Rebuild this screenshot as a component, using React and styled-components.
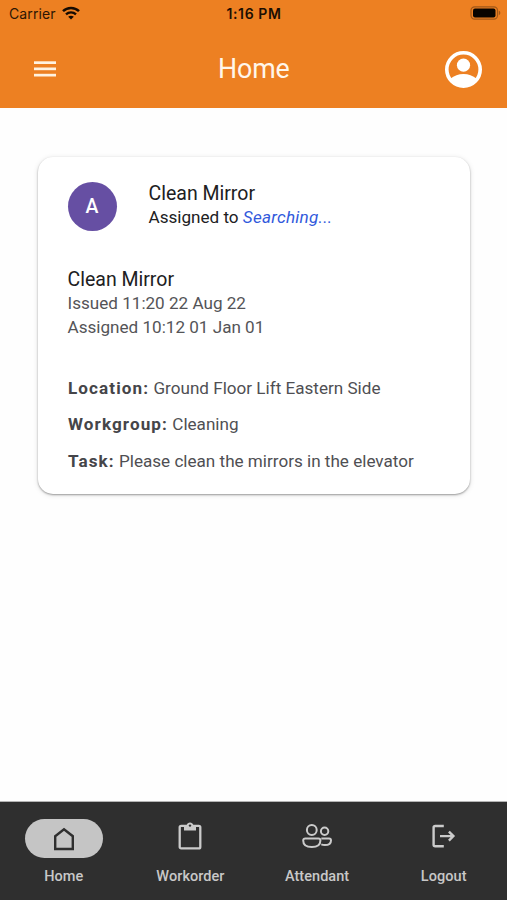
import styled, { createGlobalStyle } from "styled-components";

const GlobalStyle = createGlobalStyle`
  * {
    box-sizing: border-box;
  }
  body {
    margin: 0;
    background: #fefefe;
    font-family: Roboto, sans-serif;
  }
`;

const tabs = [
  { name: "Home", icon: HomeIcon, active: true },
  { name: "Workorder", icon: ClipboardIcon },
  { name: "Attendant", icon: PeopleIcon },
  { name: "Logout", icon: LogoutIcon },
];

const details = [
  { label: "Location:", value: "Ground Floor Lift Eastern Side" },
  { label: "Workgroup:", value: "Cleaning" },
  { label: "Task:", value: "Please clean the mirrors in the elevator" },
];

export default function App() {
  return (
    <Screen>
      <GlobalStyle />
      <Header>
        <StatusBar>
          <Carrier>
            Carrier
            <WifiIcon />
          </Carrier>
          <Clock>1:16 PM</Clock>
          <Battery>
            <BatteryIcon />
          </Battery>
        </StatusBar>
        <Toolbar>
          <IconButton aria-label="Menu">
            <MenuIcon />
          </IconButton>
          <Title>Home</Title>
          <IconButton aria-label="Account">
            <AccountIcon />
          </IconButton>
        </Toolbar>
      </Header>
      <Content>
        <Card>
          <CardHead>
            <Avatar>A</Avatar>
            <div>
              <CardTitle>Clean Mirror</CardTitle>
              <Assignee>
                Assigned to <em>Searching...</em>
              </Assignee>
            </div>
          </CardHead>
          <CardBody>
            <CardTitle>Clean Mirror</CardTitle>
            <Meta>Issued 11:20 22 Aug 22</Meta>
            <Meta>Assigned 10:12 01 Jan 01</Meta>
          </CardBody>
          <Details>
            {details.map((d) => (
              <Detail key={d.label}>
                <b>{d.label}</b> {d.value}
              </Detail>
            ))}
          </Details>
        </Card>
      </Content>
      <TabBar>
        {tabs.map(({ name, icon: Icon, active }) => (
          <Tab key={name}>
            <Pill $active={active}>
              <Icon />
            </Pill>
            <span>{name}</span>
          </Tab>
        ))}
      </TabBar>
    </Screen>
  );
}

function WifiIcon() {
  return (
    <svg width="18" height="14" viewBox="0 0 18 14" fill="none" stroke="#160b02">
      <path d="M1 5.2C5.4 .9 12.6 .9 17 5.2" strokeWidth="2.5" />
      <path d="M4 8.3C6.8 5.6 11.2 5.6 14 8.3" strokeWidth="2.3" />
      <path d="M9 13.6L6.2 10.8C7.7 9.4 10.3 9.4 11.8 10.8Z" fill="#160b02" stroke="none" />
    </svg>
  );
}

function BatteryIcon() {
  return (
    <svg width="31" height="14" viewBox="0 0 31 14">
      <rect x="1" y=".8" width="26.5" height="12.4" rx="3.6" fill="none" stroke="#a05718" strokeWidth="1.2" />
      <rect x="3" y="2.6" width="22.5" height="8.8" rx="2" fill="#080400" />
      <path d="M28.8 4.8C30.8 5.4 30.8 8.6 28.8 9.2Z" fill="#a05718" />
    </svg>
  );
}

function MenuIcon() {
  return (
    <svg width="22" height="16" viewBox="0 0 22 16" fill="#fff2e0">
      <rect width="22" height="2.7" y="0.3" />
      <rect width="22" height="2.7" y="6.5" />
      <rect width="22" height="2.7" y="12.8" />
    </svg>
  );
}

function AccountIcon() {
  return (
    <svg width="37" height="37" viewBox="0 0 37 37" fill="#fff">
      <circle cx="18.5" cy="18.5" r="16.7" fill="none" stroke="#fff" strokeWidth="3.6" />
      <circle cx="18.5" cy="14.2" r="6.6" />
      <path d="M5.5 27.5C9 24.8 13.6 23 18.5 23S28 24.8 31.5 27.5C28.8 31.8 24 34.6 18.5 34.6S8.2 31.8 5.5 27.5Z" />
    </svg>
  );
}

function HomeIcon() {
  return (
    <svg width="22" height="24" viewBox="0 0 22 24" fill="none" stroke="#2f2f2f" strokeWidth="2.4">
      <path d="M2.2 9.2L11 2.3L19.8 9.2V22H2.2Z" />
    </svg>
  );
}

function ClipboardIcon() {
  return (
    <svg width="24" height="28" viewBox="0 0 24 28" fill="none" stroke="#cbcbcb" strokeWidth="2.3">
      <rect x="1.7" y="3.8" width="20.6" height="22.6" rx="1.5" />
      <path d="M6 3H8.7C9.2 -.4 14.8 -.4 15.3 3H18V8.6H6Z" fill="#cbcbcb" stroke="none" />
      <circle cx="12" cy="3.6" r="1.2" fill="#2f2f2f" stroke="none" />
    </svg>
  );
}

function PeopleIcon() {
  return (
    <svg width="30" height="24" viewBox="0 0 30 24" fill="none" stroke="#cbcbcb" strokeWidth="2">
      <circle cx="9.8" cy="6" r="4.9" />
      <circle cx="22.6" cy="7.3" r="3.7" />
      <path d="M3.2 14.5H16.5C17.6 14.5 18.4 15.3 18.4 16.4C18.4 20.3 15.3 22.9 9.8 22.9S1.2 20.3 1.2 16.4C1.2 15.3 2 14.5 3.2 14.5Z" />
      <path d="M19.3 14.5H27.1C28.2 14.5 29 15.3 29 16.4C29 19.4 26.6 21 22.8 21C21.4 21 20.3 20.8 19.3 20.4" />
    </svg>
  );
}

function LogoutIcon() {
  return (
    <svg width="24" height="24" viewBox="0 0 24 24" fill="none" stroke="#cbcbcb" strokeWidth="2.4">
      <path d="M11.8 2H3.2Q1.6 2 1.6 3.5V20.7Q1.6 22.2 3.2 22.2H11.8" />
      <path d="M8 12.1H21.2M16.9 7.6L21.4 12.1L16.9 16.6" />
    </svg>
  );
}

const Screen = styled.div`
  height: 900px;
  width: 507px;
  display: flex;
  flex-direction: column;
  overflow: hidden;
`;

const Header = styled.header`
  height: 108px;
  background: #ed8022;
  display: flex;
  flex-direction: column;
`;

const StatusBar = styled.div`
  height: 26px;
  padding: 0 6px 0 9px;
  display: grid;
  grid-template-columns: 1fr auto 1fr;
  align-items: center;
  font-family: Inter, sans-serif;
  font-size: 14px;
  color: #2c1604;
`;

const Carrier = styled.div`
  display: flex;
  align-items: center;
  gap: 6px;
  letter-spacing: 0.1px;
`;

const Clock = styled.div`
  margin-left: -2px;
  font-weight: 600;
  letter-spacing: 0.6px;
  color: #1c0e02;
`;

const Battery = styled.div`
  display: flex;
  justify-content: flex-end;
`;

const Toolbar = styled.div`
  height: 82px;
  padding: 4px 25.5px 0 34px;
  display: grid;
  grid-template-columns: 184px 1fr auto;
  align-items: center;
`;

const IconButton = styled.button`
  display: flex;
  padding: 0;
  border: none;
  background: none;
`;

const Title = styled.h1`
  margin: 0;
  font-size: 26.8px;
  font-weight: 400;
  line-height: 32px;
  letter-spacing: -0.1px;
  color: #fff6ea;
`;

const Content = styled.main`
  flex: 1;
  padding: 49px 37px 0 38px;
`;

const Card = styled.article`
  height: 337px;
  padding: 24.5px 29.5px;
  border-radius: 15px;
  background: #fff;
  box-shadow: 0 1px 2px rgba(0, 0, 0, 0.36), 0 1px 5px 1px rgba(0, 0, 0, 0.08);
`;

const CardHead = styled.div`
  height: 49px;
  display: flex;
  gap: 32px;
`;

const Avatar = styled.div`
  width: 49px;
  height: 49px;
  border-radius: 50%;
  background: #664fa3;
  color: #fff;
  font-size: 19.5px;
  font-weight: 500;
  display: flex;
  align-items: center;
  justify-content: center;
`;

const CardTitle = styled.h2`
  margin: 0;
  font-size: 19.5px;
  font-weight: 400;
  line-height: 24px;
  color: #202022;
`;

const Assignee = styled.p`
  margin: 0;
  font-size: 17.1px;
  line-height: 23px;
  color: #202022;
  em {
    color: #3159dc;
    letter-spacing: 0.25px;
  }
`;

const CardBody = styled.div`
  margin-top: 37px;
  ${CardTitle} {
    margin-bottom: -0.8px;
  }
`;

const Meta = styled.p`
  margin: 0;
  font-size: 17.1px;
  line-height: 24px;
  color: #545457;
`;

const Details = styled.div`
  margin-top: 31px;
  padding-left: 0.5px;
  display: flex;
  flex-direction: column;
`;

const Detail = styled.p`
  margin: 0;
  font-size: 17.1px;
  line-height: 36.6px;
  color: #4f4f53;
  b {
    font-weight: 700;
    letter-spacing: 1.1px;
    color: #454549;
  }
`;

const TabBar = styled.nav`
  height: 99px;
  padding: 17px 0 0 0.5px;
  border-top: 1px solid #b4b4b4;
  background: #2f2f2f;
  display: grid;
  grid-template-columns: repeat(4, 1fr);
`;

const Tab = styled.div`
  display: flex;
  flex-direction: column;
  align-items: center;
  gap: 9px;
  font-size: 14.5px;
  font-weight: 500;
  letter-spacing: 0.05px;
  line-height: 20px;
  color: #c8c8c8;
`;

const Pill = styled.div`
  width: 78px;
  height: 39px;
  padding-bottom: ${(props) => (props.$active ? "0" : "5px")};
  border-radius: 20px;
  background: ${(props) => (props.$active ? "#c5c5c5" : "transparent")};
  display: flex;
  align-items: center;
  justify-content: center;
`;
